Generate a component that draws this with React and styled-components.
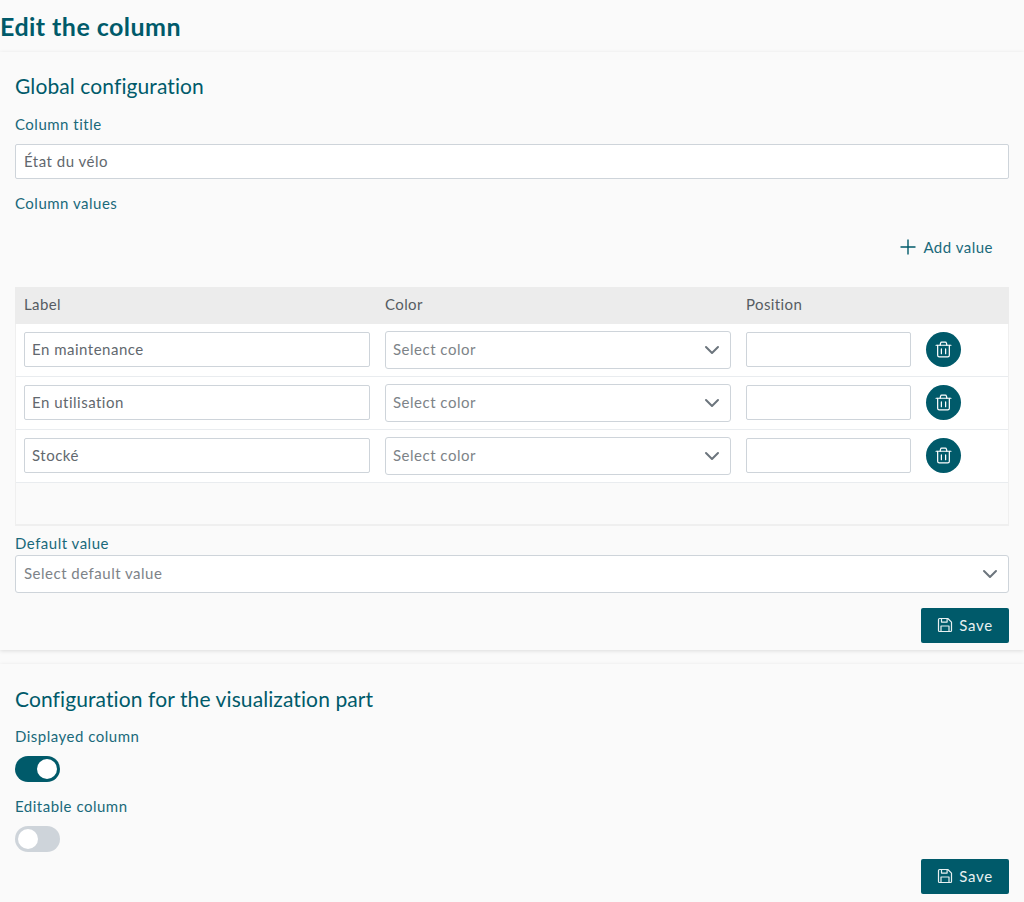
import React from 'react';
import styled, { createGlobalStyle } from 'styled-components';

const teal = '#005a6a';

const GlobalStyle = createGlobalStyle`
  html, body {
    margin: 0;
    padding: 0;
    background: #fafafa;
    font-family: Lato, "Open Sans", sans-serif;
    font-size: 15px;
    overflow: hidden;
  }
  * { box-sizing: border-box; }
`;

const Page = styled.div`
  width: 1024px;
  height: 902px;
  overflow: hidden;
`;
const PageTitle = styled.h1`
  margin: 0;
  height: 52px;
  padding-top: 11px;
  font-size: 25px;
  line-height: 30px;
  font-weight: 700;
  letter-spacing: 0.45px;
  color: ${teal};
`;
const Card = styled.section`
  background: #fafafa;
  padding: 0 15px;
  height: ${props => props.$height}px;
  margin-bottom: ${props => props.$gap || 0}px;
  box-shadow: 0 1px 4px rgba(0, 0, 0, 0.12);
`;
const CardTitle = styled.h2`
  margin: 0;
  padding-top: ${props => props.$top}px;
  font-size: 21px;
  line-height: 26px;
  font-weight: 400;
  letter-spacing: 0.1px;
  color: ${teal};
`;
const FieldLabel = styled.div`
  margin-top: ${props => props.$top || 0}px;
  font-size: 15px;
  line-height: 20px;
  letter-spacing: 0.5px;
  color: #19697a;
`;
const TextInput = styled.div`
  height: 35px;
  margin-top: ${props => props.$top || 0}px;
  padding: 0 0 2px ${props => props.$indent || 8}px;
  display: flex;
  align-items: center;
  background: #fff;
  border: 1px solid #ced4da;
  border-radius: 2px;
  font-size: 15px;
  letter-spacing: 0.5px;
  color: #62686e;
`;
const SelectBox = styled.div`
  width: 100%;
  height: 38px;
  margin-top: ${props => props.$top || 0}px;
  padding: 0 10px 2px ${props => props.$indent || 7}px;
  display: flex;
  align-items: center;
  justify-content: space-between;
  background: #fff;
  border: 1px solid #ced4da;
  border-radius: 3px;
  font-size: 15px;
  letter-spacing: 0.5px;
  color: #7d8388;
`;
const ChevronSlot = styled.span`
  display: flex;
  margin-top: 2px;
`;
const AddRow = styled.div`
  display: flex;
  justify-content: flex-end;
  padding: 24px 16px 0 0;
  height: 74px;
`;
const AddButton = styled.div`
  display: flex;
  align-items: center;
  gap: 7px;
  height: 20px;
  font-size: 15px;
  letter-spacing: 0.5px;
  color: #19697a;
`;
const Table = styled.div`
  border-bottom: 2px solid #efefef;
  border-left: 1px solid #efefef;
  border-right: 1px solid #efefef;
`;
const HeadRow = styled.div`
  display: grid;
  grid-template-columns: 361px 361px 180px 1fr;
  height: 37px;
  margin: 0 -1px;
  padding-left: 1px;
  background: #ececec;
`;
const HeadCell = styled.div`
  line-height: 35px;
  padding-left: 8px;
  font-size: 15px;
  letter-spacing: 0.4px;
  color: #565c62;
`;
const Row = styled.div`
  display: grid;
  grid-template-columns: 360px 361px 180px 1fr;
  align-items: center;
  height: 53px;
  padding-bottom: 1px;
  background: #fff;
  border-bottom: 1px solid #e9ecef;
`;
const Cell = styled.div`
  padding: 0 6px 0 ${props => props.$left || 9}px;
`;
const EmptyRow = styled.div`
  height: 41px;
`;
const RoundButton = styled.div`
  width: 35px;
  height: 35px;
  display: flex;
  align-items: center;
  justify-content: center;
  border-radius: 50%;
  background: ${teal};
`;
const SaveRow = styled.div`
  display: flex;
  justify-content: flex-end;
  margin-top: ${props => props.$top}px;
`;
const SaveButton = styled.div`
  width: 88px;
  height: 35px;
  padding-bottom: 2px;
  display: flex;
  align-items: center;
  justify-content: center;
  gap: 6px;
  background: ${teal};
  border-radius: 2px;
  font-size: 15px;
  letter-spacing: 0.7px;
  color: #e8f0f1;
`;
const Track = styled.div`
  width: 45px;
  height: 26px;
  margin-top: ${props => props.$top}px;
  padding: 3px;
  display: flex;
  justify-content: ${props => (props.$on ? 'flex-end' : 'flex-start')};
  border-radius: 13px;
  background: ${props => (props.$on ? teal : '#ced4da')};
`;
const Knob = styled.div`
  width: 20px;
  height: 20px;
  border-radius: 50%;
  background: #fff;
`;

const Chevron = () => (
  <ChevronSlot>
    <svg width="16" height="16" viewBox="0 0 16 16" fill="none" stroke="#6c757d" strokeWidth="2" strokeLinecap="round" strokeLinejoin="round">
      <path d="M2 5l6 6 6-6" />
    </svg>
  </ChevronSlot>
);

const PlusIcon = () => (
  <svg width="16" height="16" viewBox="0 0 16 16" fill="none" stroke={teal} strokeWidth="1.4">
    <path d="M8 .5v15M.5 8h15" />
  </svg>
);

const TrashIcon = () => (
  <svg width="17" height="17" viewBox="0 0 16 16" fill="none" stroke="#fff" strokeWidth="1.15" strokeLinecap="round" strokeLinejoin="round">
    <path d="M1 4h14" />
    <path d="M4.8 4l.5-2.2c.1-.5.5-.8 1-.8h3.4c.5 0 .9.3 1 .8l.5 2.2" />
    <path d="M2.5 4v9.5c0 .9.6 1.5 1.5 1.5h8c.9 0 1.5-.6 1.5-1.5V4" />
    <path d="M6 7.5v4.5M10 7.5v4.5" />
  </svg>
);

const SaveIcon = () => (
  <svg width="16" height="16" viewBox="0 0 16 16" fill="none" stroke="#e8f0f1" strokeWidth="1.2" strokeLinejoin="round">
    <path d="M1.5 2.5c0-.6.4-1 1-1h8.3l3.7 3.7v8.3c0 .6-.4 1-1 1h-11c-.6 0-1-.4-1-1z" />
    <path d="M4.5 1.5v3.6h5.6V1.5" />
    <path d="M4 14.5V9h8v5.5" />
  </svg>
);

const values = ['En maintenance', 'En utilisation', 'Stocké'];

function App() {
  return (
    <Page>
      <GlobalStyle />
      <PageTitle>Edit the column</PageTitle>
      <Card $height={598} $gap={14}>
        <CardTitle $top={21}>Global configuration</CardTitle>
        <FieldLabel $top={15}>Column title</FieldLabel>
        <TextInput $top={10}>État du vélo</TextInput>
        <FieldLabel $top={14}>Column values</FieldLabel>
        <AddRow>
          <AddButton>
            <PlusIcon />
            Add value
          </AddButton>
        </AddRow>
        <Table>
          <HeadRow>
            <HeadCell>Label</HeadCell>
            <HeadCell>Color</HeadCell>
            <HeadCell>Position</HeadCell>
            <HeadCell />
          </HeadRow>
          {values.map(value => (
            <Row key={value}>
              <Cell $left={8}>
                <TextInput $indent={7}>{value}</TextInput>
              </Cell>
              <Cell>
                <SelectBox>
                  Select color
                  <Chevron />
                </SelectBox>
              </Cell>
              <Cell>
                <TextInput />
              </Cell>
              <Cell>
                <RoundButton>
                  <TrashIcon />
                </RoundButton>
              </Cell>
            </Row>
          ))}
          <EmptyRow />
        </Table>
        <FieldLabel $top={7}>Default value</FieldLabel>
        <SelectBox $top={2} $indent={8}>
          Select default value
          <Chevron />
        </SelectBox>
        <SaveRow $top={15}>
          <SaveButton>
            <SaveIcon />
            Save
          </SaveButton>
        </SaveRow>
      </Card>
      <Card $height={238}>
        <CardTitle $top={22}>Configuration for the visualization part</CardTitle>
        <FieldLabel $top={14}>Displayed column</FieldLabel>
        <Track $on $top={10}>
          <Knob />
        </Track>
        <FieldLabel $top={14}>Editable column</FieldLabel>
        <Track $top={10}>
          <Knob />
        </Track>
        <SaveRow $top={7}>
          <SaveButton>
            <SaveIcon />
            Save
          </SaveButton>
        </SaveRow>
      </Card>
    </Page>
  );
}

export default App;
